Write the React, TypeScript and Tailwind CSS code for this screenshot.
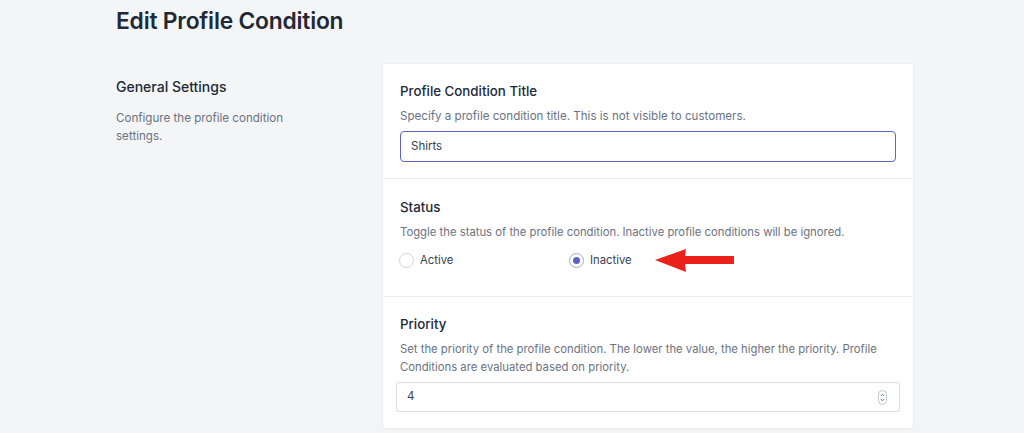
export default function App() {
  return (
    <div className="w-full bg-[#f4f5f7] font-['Inter',sans-serif] text-[#1f2937] overflow-hidden h-[433px]">
      <div className="ml-[116px] w-[798px]">
        <h1 className="pt-[5px] text-[22.8px] leading-[32px] font-semibold tracking-[-0.2px] text-[#212936]">
          Edit Profile Condition
        </h1>
        <div className="mt-[26px] flex">
          <div className="w-[266px] shrink-0 pt-[14px]">
            <h2 className="text-[14px] leading-[20px] font-medium text-[#212936]">General Settings</h2>
            <p className="mt-[12px] w-[190px] text-[11.6px] leading-[18px] text-[#6b7280]">
              Configure the profile condition settings.
            </p>
          </div>
          <div className="flex-1 rounded-[3px] border border-[#eceef1] bg-white shadow-[0_1px_2px_rgba(0,0,0,0.04)]">
            <section className="px-[17px] pt-[17px] pb-[16px] border-b border-[#e8eaed]">
              <h3 className="text-[13.3px] leading-[20px] font-medium text-[#212936]">Profile Condition Title</h3>
              <p className="mt-[6px] text-[11.6px] leading-[18px] text-[#6b7280]">
                Specify a profile condition title. This is not visible to customers.
              </p>
              <div className="mt-[6px] flex h-[31px] items-center rounded-[4px] border-[1.5px] border-[#5c63c4] px-[10px] text-[11.5px] text-[#374151]">
                Shirts
              </div>
            </section>
            <section className="px-[17px] pt-[18px] pb-[26px] border-b border-[#e8eaed]">
              <h3 className="text-[13.3px] leading-[20px] font-medium text-[#212936]">Status</h3>
              <p className="mt-[5px] text-[11.3px] leading-[20px] text-[#6b7280]">
                Toggle the status of the profile condition. Inactive profile conditions will be ignored.
              </p>
              <div className="mt-[8px] flex h-[20px] items-center">
                <div className="flex w-[169px] items-center">
                  <span className="ml-[-1px] h-[15px] w-[15px] rounded-full border border-[#d1d5db] bg-white"></span>
                  <span className="ml-[6px] text-[11.3px] text-[#374151]">Active</span>
                </div>
                <div className="flex items-center">
                  <span className="flex h-[15px] w-[15px] items-center justify-center rounded-full border border-[#a5a9d8] bg-white">
                    <span className="h-[7px] w-[7px] rounded-full bg-[#5c63c4]"></span>
                  </span>
                  <span className="ml-[6px] text-[11.3px] text-[#374151]">Inactive</span>
                  <svg className="ml-[22px]" width="82" height="26" viewBox="0 0 82 26">
                    <polygon points="1,13 32,2 31,9 80,9 80,17 31,17 32,25" fill="#ea221b" />
                  </svg>
                </div>
              </div>
            </section>
            <section className="px-[13px] pt-[17px] pb-[16px]">
              <h3 className="ml-[4px] text-[13.3px] leading-[20px] font-medium text-[#212936]">Priority</h3>
              <p className="ml-[4px] mt-[6px] text-[11.3px] leading-[18px] text-[#6b7280]">
                Set the priority of the profile condition. The lower the value, the higher the priority. Profile Conditions are evaluated based on priority.
              </p>
              <div className="mt-[6px] flex h-[30px] items-center justify-between rounded-[3px] border border-[#d9dce1] pl-[10px] pr-[12px] text-[11.5px] text-[#374151]">
                <span>4</span>
                <svg width="9" height="15" viewBox="0 0 9 15">
                  <rect x="0.5" y="0.5" width="8" height="14" rx="4" fill="#fff" stroke="#c4c7cc" />
                  <path d="M2.8 6 L4.5 4.2 L6.2 6" fill="none" stroke="#6b7280" strokeWidth="1" />
                  <path d="M2.8 9 L4.5 10.8 L6.2 9" fill="none" stroke="#6b7280" strokeWidth="1" />
                </svg>
              </div>
            </section>
          </div>
        </div>
      </div>
    </div>
  );
}
